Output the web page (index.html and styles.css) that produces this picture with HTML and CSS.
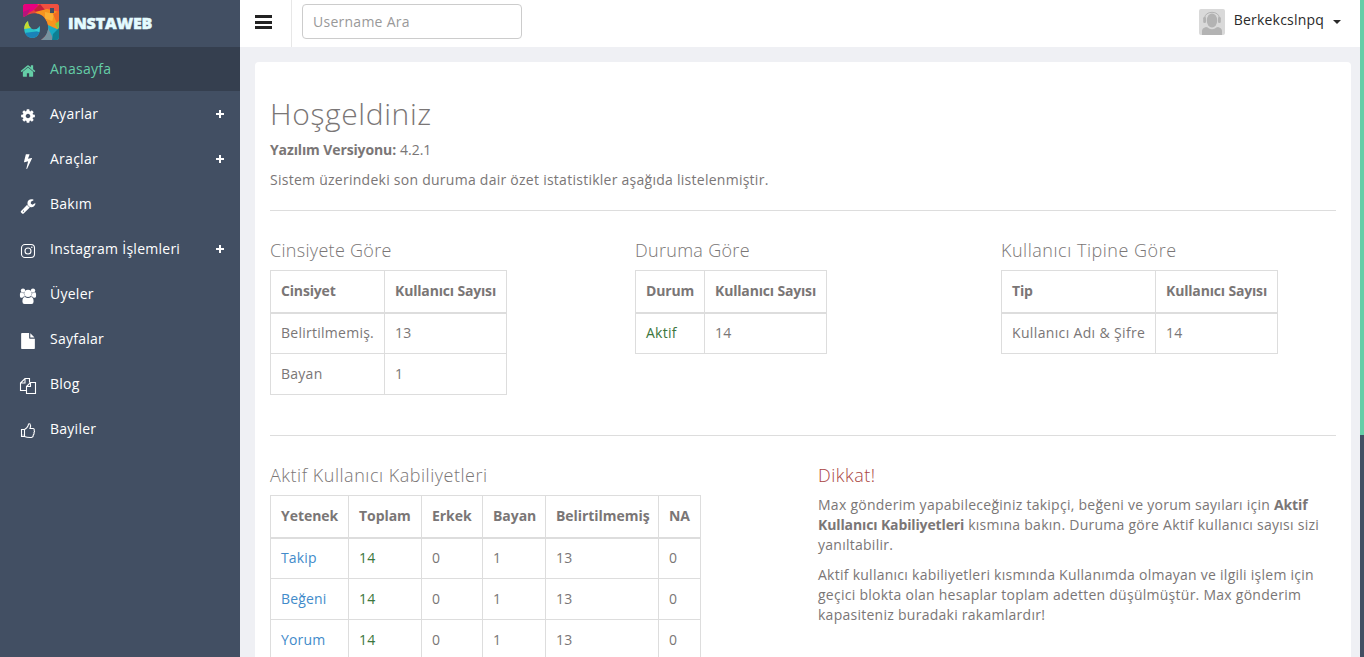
FILE: index.html
```html
<!DOCTYPE html>
<html lang="tr">
<head>
<meta charset="utf-8">
<title>Instaweb</title>
<link rel="stylesheet" href="styles.css">
</head>
<body>
<div class="app">
  <aside class="sidebar">
    <div class="brand">
      <svg class="logo" viewBox="0 0 36 36">
        <defs><clipPath id="tile"><path d="M3 0H33Q36 0 36 3V33Q36 36 33 36H18C24 32 27 25 24 18C21 9 10 6 1 13L0 12V3Q0 0 3 0Z"/></clipPath><clipPath id="lens"><path d="M5 17C-1 21 0 33 9 34C15 34 17.500 29 16.500 22C15 27 6 28 5 17Z"/></clipPath></defs>
        <g clip-path="url(#tile)">
          <path fill="#e5433b" d="M0 0H36V36H0Z"/>
          <path fill="#e6007e" d="M0 0H17L11 6L0 12Z"/><path fill="#b5157c" d="M0 8L7 5L3 14H0Z"/>
          <path fill="#f0503f" d="M14 0H36V8L22 6Z"/><path fill="#c2203c" d="M11 6L17 0L22 6L15 10Z"/>
          <path fill="#f7941e" d="M12 8L24 5L36 8V26L25 18Z"/><path fill="#fbb034" d="M22 8L31 10L28 22L22 14Z"/>
          <path fill="#f7941e" d="M23 15L36 19V28L24 22Z"/>
          <path fill="#f26a25" d="M30 10L36 7V24Z"/><path fill="#8cc63f" d="M32 20L36 17V27Z"/>
          <path fill="#18a9c2" d="M25 21L36 26V36H22Z"/><path fill="#78929f" d="M25 24L31 36H17Z"/><path fill="#0d7f93" d="M30 30L36 24V36H29Z"/>
        </g>
        <path fill="#434f63" d="M27 4H31V9H27Z"/>
        <g clip-path="url(#lens)"><path fill="#29c3c9" d="M0 14H20V36H0Z"/><path fill="#c5d92d" d="M0 15H10L8 24L1 25Z"/><path fill="#1b82b8" d="M1 29L18 27V36H1Z"/><path fill="#35cbd6" d="M9 25L18 21V29Z"/></g>
      </svg>
      <span class="brand-name">INSTAWEB</span>
    </div>
    <nav class="menu">
      <a class="item active"><svg class="ico" viewBox="0 0 1792 1792"><path d="M1472 992v480q0 26-19 45t-45 19h-384v-384h-256v384h-384q-26 0-45-19t-19-45v-480q0-1 .5-3t.5-3l575-474 575 474q1 2 1 6zm223-69l-62 74q-8 9-21 11h-3q-13 0-21-7l-692-577-692 577q-12 8-24 7-13-2-21-11l-62-74q-8-10-7-23.5t11-21.5l719-599q32-26 76-26t76 26l244 204v-195q0-14 9-23t23-9h192q14 0 23 9t9 23v408l219 182q10 8 11 21.5t-7 23.5z"/></svg><span>Anasayfa</span></a>
      <a class="item"><svg class="ico" viewBox="0 0 1792 1792"><path d="M1152 896q0-106-75-181t-181-75-181 75-75 181 75 181 181 75 181-75 75-181zm512-109v222q0 12-8 23t-20 13l-185 28q-19 54-39 91 35 50 107 138 10 12 10 25t-9 23q-27 37-99 108t-94 71q-12 0-26-9l-138-108q-44 23-91 38-16 136-29 186-7 28-36 28h-222q-14 0-24.5-8.5t-11.5-21.5l-28-184q-49-16-90-37l-141 107q-10 9-25 9-14 0-25-11-126-114-165-168-7-10-7-23 0-12 8-23 15-21 51-66.5t54-70.5q-27-50-41-99l-183-27q-13-2-21-12.5t-8-23.5v-222q0-12 8-23t19-13l186-28q14-46 39-92-40-57-107-138-10-12-10-24 0-10 9-23 26-36 98.5-107.5t94.5-71.5q13 0 26 10l138 107q44-23 91-38 16-136 29-186 7-28 36-28h222q14 0 24.5 8.5t11.5 21.5l28 184q49 16 90 37l142-107q9-9 24-9 13 0 25 10 129 119 165 170 7 8 7 22 0 12-8 23-15 21-51 66.5t-54 70.5q26 50 41 98l183 28q13 2 21 12.5t8 23.5z"/></svg><span>Ayarlar</span><b class="plus"></b></a>
      <a class="item"><svg class="ico" viewBox="0 0 1792 1792"><path d="M1333 566q18 20 7 44l-540 1157q-13 25-42 25-4 0-14-2-17-5-25.5-19t-4.5-30l197-808-406 101q-4 1-12 1-18 0-31-11-18-15-13-39l201-825q4-14 16-23t28-9h328q19 0 32 12.5t13 29.5q0 8-5 18l-171 463 396-98q8-2 12-2 19 0 34 15z"/></svg><span>Araçlar</span><b class="plus"></b></a>
      <a class="item"><svg class="ico" viewBox="0 0 1792 1792"><path d="M448 1472q0-26-19-45t-45-19-45 19-19 45 19 45 45 19 45-19 19-45zm644-420l-682 682q-37 37-90 37-52 0-91-37l-106-108q-38-36-38-90 0-53 38-91l681-681q39 98 114.5 173.5t173.5 114.5zm634-435q0 39-23 106-47 134-164.5 217.5t-258.5 83.5q-185 0-316.5-131.5t-131.5-316.5 131.5-316.5 316.5-131.5q58 0 121.5 16.5t107.5 46.5q16 11 16 28t-16 28l-293 169v224l193 107q5-3 79-48.5t135.5-81 70.5-35.5q15 0 23.5 10t8.5 25z"/></svg><span>Bakım</span></a>
      <a class="item"><svg class="ico line" viewBox="0 0 16 16"><rect x="1.5" y="1.5" width="13" height="13" rx="3.5"/><circle cx="8" cy="8" r="3"/><circle class="dot" cx="11.8" cy="4.2" r=".8"/></svg><span>Instagram İşlemleri</span><b class="plus"></b></a>
      <a class="item"><svg class="ico users" viewBox="0 0 16 16"><circle cx="3" cy="2.6" r="2.2"/><circle cx="13" cy="2.6" r="2.2"/><circle cx="8" cy="5.3" r="3.6"/><path d="M0 8.5Q-.5 4.5 1.2 4.3Q3 5.6 4.3 5Q4 7 5.4 8.5H4Q2.8 9 2.4 9.8H1Q0 9.5 0 8.5ZM16 8.5Q16.5 4.5 14.8 4.3Q13 5.6 11.700 5Q12 7 10.600 8.500H12Q13.200 9 13.600 9.800H15Q16 9.500 16 8.500ZM5 9Q8 11.200 11 9Q13.600 9 13.600 13.500Q13.600 16 11.500 16H4.500Q2.400 16 2.400 13.500Q2.400 9 5 9Z"/></svg><span>Üyeler</span></a>
      <a class="item"><svg class="ico" viewBox="0 0 1792 1792"><path d="M1152 512v-472q22 14 36 28l408 408q14 14 28 36h-472zm-128 32q0 40 28 68t68 28h544v1056q0 40-28 68t-68 28h-1344q-40 0-68-28t-28-68v-1600q0-40 28-68t68-28h800v544z"/></svg><span>Sayfalar</span></a>
      <a class="item"><svg class="ico line" viewBox="0 0 16 16"><path d="M6.500 12.500H.5V5L5 .5H9.500V4.500M.5 5H5V.5M6.500 8.500L10.500 4.500H15.500V15.500H6.500V8.500H10.500V4.500"/></svg><span>Blog</span></a>
      <a class="item"><svg class="ico line" viewBox="0 0 16 16"><path d="M4.500 6.500H1.500V13.500H4.500C7 14.700 9 14.500 11.500 14.500Q13.500 14 13.300 12Q14.500 11 14 9.500Q15 8.500 14.200 7.500Q14.500 5.500 13 5.500H10Q11.300 2.500 10 1Q8.300 0 8.200 2.500Q7.500 4.200 6.500 5L4.500 6.500V13.500"/><circle class="dot" cx="3" cy="12" r=".6"/></svg><span>Bayiler</span></a>
    </nav>
  </aside>
  <div class="main">
    <header class="topbar">
      <div class="toggle"><i></i><i></i><i></i></div>
      <input class="search" type="text" placeholder="Username Ara">
      <div class="user">
        <svg class="avatar" viewBox="0 0 26 26"><rect width="26" height="26" rx="2" fill="#d9d9d9"/><g fill="#b3b3b3"><ellipse cx="13" cy="11.500" rx="5.200" ry="7"/><rect x="4.200" y="8" width="2.800" height="6" rx="1.200"/><rect x="19" y="8" width="2.800" height="6" rx="1.200"/><path d="M3 26V22Q3 19 7 18Q9 18 10 19.500Q13 21 16 19.500Q17 18 19 18Q23 19 23 22V26Z"/></g><path d="M5.500 9Q6.500 3.500 13 3.300Q19.500 3.500 20.500 9" fill="none" stroke="#b3b3b3"/></svg>
        <span class="user-name">Berkekcslnpq</span><i class="caret"></i>
      </div>
    </header>
    <main class="panel">
      <h2>Hoşgeldiniz</h2>
      <p><strong>Yazılım Versiyonu:</strong> <span class="version">4.2.1</span></p>
      <p>Sistem üzerindeki son duruma dair özet istatistikler aşağıda listelenmiştir.</p>
      <hr>
      <div class="thirds">
        <section>
          <h4 class="snug">Cinsiyete Göre</h4>
          <table class="gender">
            <tr><th>Cinsiyet</th><th>Kullanıcı Sayısı</th></tr>
            <tr><td>Belirtilmemiş.</td><td>13</td></tr>
            <tr><td>Bayan</td><td>1</td></tr>
          </table>
        </section>
        <section>
          <h4 class="snug">Duruma Göre</h4>
          <table class="status">
            <tr><th>Durum</th><th>Kullanıcı Sayısı</th></tr>
            <tr><td class="ok">Aktif</td><td>14</td></tr>
          </table>
        </section>
        <section>
          <h4>Kullanıcı Tipine Göre</h4>
          <table class="type">
            <tr><th>Tip</th><th>Kullanıcı Sayısı</th></tr>
            <tr><td>Kullanıcı Adı &amp; Şifre</td><td>14</td></tr>
          </table>
        </section>
      </div>
      <hr>
      <div class="halves">
        <section>
          <h4>Aktif Kullanıcı Kabiliyetleri</h4>
          <table class="skills">
            <colgroup><col class="c1"><col class="c2"><col class="c3"><col class="c4"><col class="c5"><col class="c6"></colgroup>
            <tr><th>Yetenek</th><th>Toplam</th><th>Erkek</th><th>Bayan</th><th>Belirtilmemiş</th><th>NA</th></tr>
            <tr><td><a>Takip</a></td><td class="ok">14</td><td>0</td><td>1</td><td>13</td><td>0</td></tr>
            <tr><td><a>Beğeni</a></td><td class="ok">14</td><td>0</td><td>1</td><td>13</td><td>0</td></tr>
            <tr><td><a>Yorum</a></td><td class="ok">14</td><td>0</td><td>1</td><td>13</td><td>0</td></tr>
          </table>
        </section>
        <section class="notice">
          <h4>Dikkat!</h4>
          <p>Max gönderim yapabileceğiniz takipçi, beğeni ve yorum sayıları için <strong>Aktif Kullanıcı Kabiliyetleri</strong> kısmına bakın. Duruma göre Aktif kullanıcı sayısı sizi yanıltabilir.</p>
          <p>Aktif kullanıcı kabiliyetleri kısmında Kullanımda olmayan ve ilgili işlem için geçici blokta olan hesaplar toplam adetten düşülmüştür. Max gönderim kapasiteniz buradaki rakamlardır!</p>
        </section>
      </div>
    </main>
  </div>
  <div class="scroll"><div class="thumb"></div></div>
</div>
</body>
</html>
```
FILE: styles.css
```css
* { box-sizing: border-box; }
body { margin: 0; overflow: hidden; background: #eff0f4; color: #7a7676; font: 14px/20px "Open Sans", "Noto Sans", sans-serif; letter-spacing: .26px; }
.app { display: flex; height: 657px; overflow: hidden; }
.sidebar { width: 240px; flex: none; background: #424f63; }
.brand { height: 47px; display: flex; padding: 4px 0 0 23px; }
.logo { width: 36px; height: 36px; }
.brand-name { margin: 9px 0 0 9px; font: 800 16px/20px "Open Sans", sans-serif; letter-spacing: -.15px; color: #e4fbff; -webkit-text-stroke: .5px #e4fbff; }
.menu { display: flex; flex-direction: column; gap: 1px; }
.item { display: flex; height: 44px; padding: 12px 16px 0 20px; color: #fff; }
.item.active { background: #353f4f; color: #65cea7; }
.ico { width: 16px; height: 16px; margin: 4px 14px 0 0; fill: currentColor; overflow: visible; }
.line { fill: none; stroke: currentColor; stroke-width: 1.1; }
.line .dot { fill: currentColor; stroke: none; }
.plus { width: 8px; height: 8px; margin: 6px 0 0 auto; background: linear-gradient(#fff, #fff) 50% 50% / 8px 2px no-repeat, linear-gradient(#fff, #fff) 50% 50% / 2px 8px no-repeat; }
.main { flex: 1; min-width: 0; }
.topbar { height: 47px; display: flex; background: #fff; }
.toggle { width: 52px; height: 47px; padding: 15px 0 0 15px; border-right: 1px solid #e7e7e7; display: flex; flex-direction: column; gap: 2px; }
.toggle i { width: 17px; height: 3px; background: #222; }
.toggle i + i { margin-top: .5px; }
.search { width: 220px; height: 35px; margin: 4px 0 0 10px; padding: 0 10px; border: 1px solid #ccc; border-radius: 4px; font: inherit; letter-spacing: inherit; background: #fff; }
.search::placeholder { color: #999; }
.user { display: flex; margin-left: auto; padding: 9px 19px 0 0; color: #2a2a2a; letter-spacing: .2px; }
.avatar { width: 26px; height: 26px; margin-right: 9px; }
.user-name { margin-top: 1px; }
.caret { width: 8px; height: 4px; margin: 11px 0 0 9px; border: 4px solid transparent; border-top-color: #2a2a2a; border-bottom: 0; }
.panel { height: 700px; margin: 15px 9px 0 15px; padding: 35px 15px; background: #fff; border-radius: 4px; }
h2 { margin: 0 0 10px; font-size: 30px; font-weight: 300; line-height: 33px; letter-spacing: .62px; }
h4 { margin: 0 0 10px; font-size: 18px; font-weight: 300; line-height: 20px; letter-spacing: .52px; }
.snug { letter-spacing: .3px; }
p { margin: 0 0 10px; }
strong { letter-spacing: -.12px; }
.version { letter-spacing: 0; }
hr { height: 1px; margin: 20px 0 29px; border: 0; background: #ddd; }
.thirds { display: grid; grid-template-columns: 365px 366px 1fr; height: 175px; }
.halves { display: grid; grid-template-columns: 548px 518px; }
table { border-collapse: collapse; table-layout: fixed; }
th, td { height: 41px; padding: 0 10px; border: 1px solid #ddd; text-align: left; white-space: nowrap; }
th { height: 42px; border-bottom-width: 2px; letter-spacing: -.17px; }
.gender { width: 237px; } .gender th:first-child { width: 114px; }
.status { width: 192px; } .status th:first-child { width: 69px; }
.type { width: 277px; } .type th:first-child { width: 154px; }
.skills { width: 431px; }
.skills th { letter-spacing: -.05px; }
.skills td { letter-spacing: .15px; }
.type td { letter-spacing: .35px; }
.c1 { width: 78px; } .c2 { width: 73px; } .c3 { width: 61px; } .c4 { width: 63px; } .c5 { width: 113px; } .c6 { width: 42px; }
.skills a { color: #428bca; }
.ok { color: #3c763d; }
.notice { padding-right: 15px; }
.notice h4 { color: #a94442; }
.scroll { width: 4px; flex: none; background: #424f63; }
.thumb { height: 435px; background: #65cea7; }
```
